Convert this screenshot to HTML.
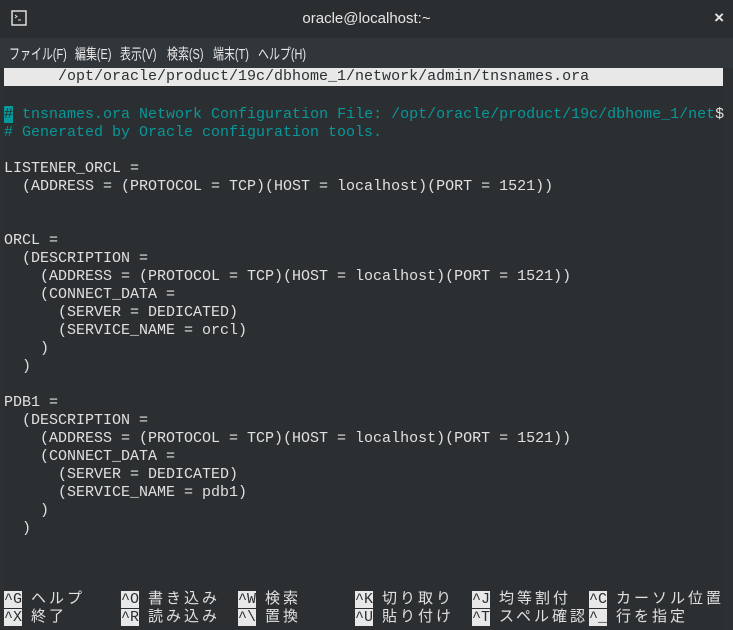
<!DOCTYPE html>
<html><head><meta charset="utf-8"><style>
html,body{margin:0;padding:0;}
body{width:733px;height:630px;overflow:hidden;background:#2c3033;position:relative;font-family:"Liberation Sans","Noto Sans CJK JP",sans-serif;}
#title{position:absolute;left:0;top:0;width:733px;height:38px;background:#2a2e31;color:#e6e6e6;font-size:15px;}
#title .t{position:absolute;left:0;width:733px;top:10px;text-align:center;}
#menu{position:absolute;left:0;top:38px;width:733px;height:30px;background:#31363a;color:#e8e8e8;font-size:15px;}
#menu span{position:absolute;top:5px;transform:scaleX(0.73);transform-origin:0 0;white-space:nowrap;}
#term{position:absolute;left:4px;top:68px;width:719px;height:562px;background:#2b2f31;}
.r{position:absolute;left:0;height:18px;line-height:18px;font-family:"Liberation Mono","Noto Sans CJK JP",monospace;font-size:15px;color:#e0e0e0;white-space:pre;}
.c{color:#06989a;}
.inv{background:#e8e8e8;color:#2b2f31;}
.k{position:absolute;top:0;}
.j{letter-spacing:3px;}
</style></head><body>
<div id="title">
<svg style="position:absolute;left:11px;top:10px" width="16" height="16"><rect x="1" y="1" width="14" height="14" fill="none" stroke="#ddd" stroke-width="1.5"/><path d="M4 5l2 1.5-2 1.5M7 10h3" stroke="#ddd" fill="none" stroke-width="1"/></svg>
<div class="t">oracle@localhost:~</div>
<div style="position:absolute;right:9px;top:8px;font-size:17px;font-weight:bold">×</div>
</div>
<div id="menu">
<span style="left:9px">ファイル(F)</span><span style="left:75px">編集(E)</span><span style="left:120px">表示(V)</span><span style="left:167px">検索(S)</span><span style="left:213px">端末(T)</span><span style="left:258px">ヘルプ(H)</span>
</div>
<div id="term">
<div class="r inv" style="top:0;width:719px">      /opt/oracle/product/19c/dbhome_1/network/admin/tnsnames.ora</div>
<div class="r c" style="top:38px"><span style="background:#06989a;color:#2b2f31">#</span> tnsnames.ora Network Configuration File: /opt/oracle/product/19c/dbhome_1/net<span style="color:#e0e0e0">$</span></div>
<div class="r c" style="top:56px"># Generated by Oracle configuration tools.</div>
<div class="r" style="top:92px">LISTENER_ORCL =</div>
<div class="r" style="top:110px">  (ADDRESS = (PROTOCOL = TCP)(HOST = localhost)(PORT = 1521))</div>
<div class="r" style="top:164px">ORCL =</div>
<div class="r" style="top:182px">  (DESCRIPTION =</div>
<div class="r" style="top:200px">    (ADDRESS = (PROTOCOL = TCP)(HOST = localhost)(PORT = 1521))</div>
<div class="r" style="top:218px">    (CONNECT_DATA =</div>
<div class="r" style="top:236px">      (SERVER = DEDICATED)</div>
<div class="r" style="top:254px">      (SERVICE_NAME = orcl)</div>
<div class="r" style="top:272px">    )</div>
<div class="r" style="top:290px">  )</div>
<div class="r" style="top:326px">PDB1 =</div>
<div class="r" style="top:344px">  (DESCRIPTION =</div>
<div class="r" style="top:362px">    (ADDRESS = (PROTOCOL = TCP)(HOST = localhost)(PORT = 1521))</div>
<div class="r" style="top:380px">    (CONNECT_DATA =</div>
<div class="r" style="top:398px">      (SERVER = DEDICATED)</div>
<div class="r" style="top:416px">      (SERVICE_NAME = pdb1)</div>
<div class="r" style="top:434px">    )</div>
<div class="r" style="top:452px">  )</div>
<div class="r" style="top:523px;width:719px"><span class="k" style="left:0"><span class="inv">^G</span> <span class="j">ヘルプ</span></span><span class="k" style="left:117px"><span class="inv">^O</span> <span class="j">書き込み</span></span><span class="k" style="left:234px"><span class="inv">^W</span> <span class="j">検索</span></span><span class="k" style="left:351px"><span class="inv">^K</span> <span class="j">切り取り</span></span><span class="k" style="left:468px"><span class="inv">^J</span> <span class="j">均等割付</span></span><span class="k" style="left:585px"><span class="inv">^C</span> <span class="j">カーソル位置</span></span></div>
<div class="r" style="top:541px;width:719px"><span class="k" style="left:0"><span class="inv">^X</span> <span class="j">終了</span></span><span class="k" style="left:117px"><span class="inv">^R</span> <span class="j">読み込み</span></span><span class="k" style="left:234px"><span class="inv">^\</span> <span class="j">置換</span></span><span class="k" style="left:351px"><span class="inv">^U</span> <span class="j">貼り付け</span></span><span class="k" style="left:468px"><span class="inv">^T</span> <span class="j">スペル確認</span></span><span class="k" style="left:585px"><span class="inv">^_</span> <span class="j">行を指定</span></span></div>
</div>
</body></html>
